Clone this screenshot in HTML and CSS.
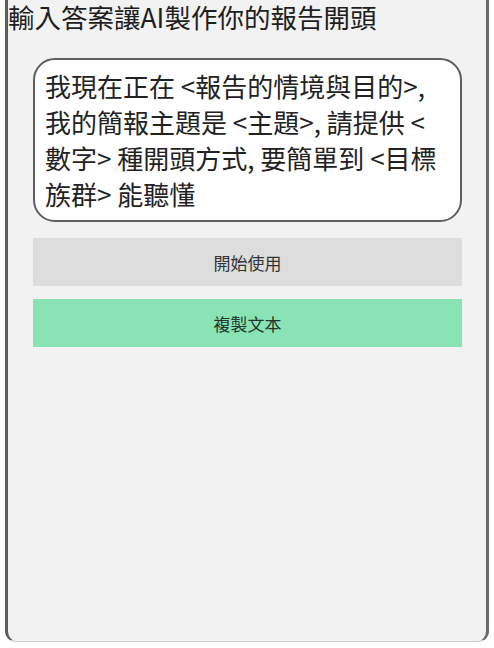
FILE: index.html
```html
<!DOCTYPE html>
<html lang="zh-Hant">
<head>
<meta charset="utf-8">
<link rel="stylesheet" href="styles.css">
</head>
<body>
<div class="frame">
  <h1 class="title">輸入答案讓AI製作你的報告開頭</h1>
  <div class="prompt">我現在正在 &lt;報告的情境與目的&gt;,<br>我的簡報主題是 &lt;主題&gt;, 請提供 &lt;<br>數字&gt; 種開頭方式, 要簡單到 &lt;目標<br>族群&gt; 能聽懂</div>
  <div class="actions">
    <div class="btn btn-start">開始使用</div>
    <div class="btn btn-copy">複製文本</div>
  </div>
</div>
</body>
</html>
```
FILE: styles.css
```css
html, body {
  margin: 0;
  padding: 0;
  background: #ffffff;
}
body {
  font-family: "Noto Sans CJK TC", "Noto Sans", sans-serif;
  color: #222;
}
.frame {
  margin-left: 5px;
  width: 478px;
  height: 641px;
  background: #f2f2f2;
  border-left: 3px solid #5c5c5c;
  border-right: 3px solid #6a6a6a;
  border-bottom: 1px solid #cfcfcf;
  border-radius: 0 0 11px 11px;
  box-sizing: content-box;
}
.title {
  margin: 0;
  padding-top: 1px;
  font-size: 26.5px;
  font-weight: 400;
  line-height: 32px;
  color: #1e1e1e;
  white-space: nowrap;
}
.prompt {
  margin: 25px 24px 0 25px;
  height: 144px;
  padding: 8px 10px;
  background: #ffffff;
  border: 2px solid #5e5e5e;
  border-radius: 22px;
  font-size: 26px;
  line-height: 36px;
  white-space: nowrap;
  color: #222;
}
.actions {
  display: flex;
  flex-direction: column;
  gap: 13px;
  margin: 16px 24px 0 25px;
}
.btn {
  height: 48px;
  display: flex;
  align-items: center;
  justify-content: center;
  font-size: 17px;
  color: #333;
}
.btn-start {
  background: #dddddd;
}
.btn-copy {
  background: #89e3b5;
  color: #24352b;
}
```
